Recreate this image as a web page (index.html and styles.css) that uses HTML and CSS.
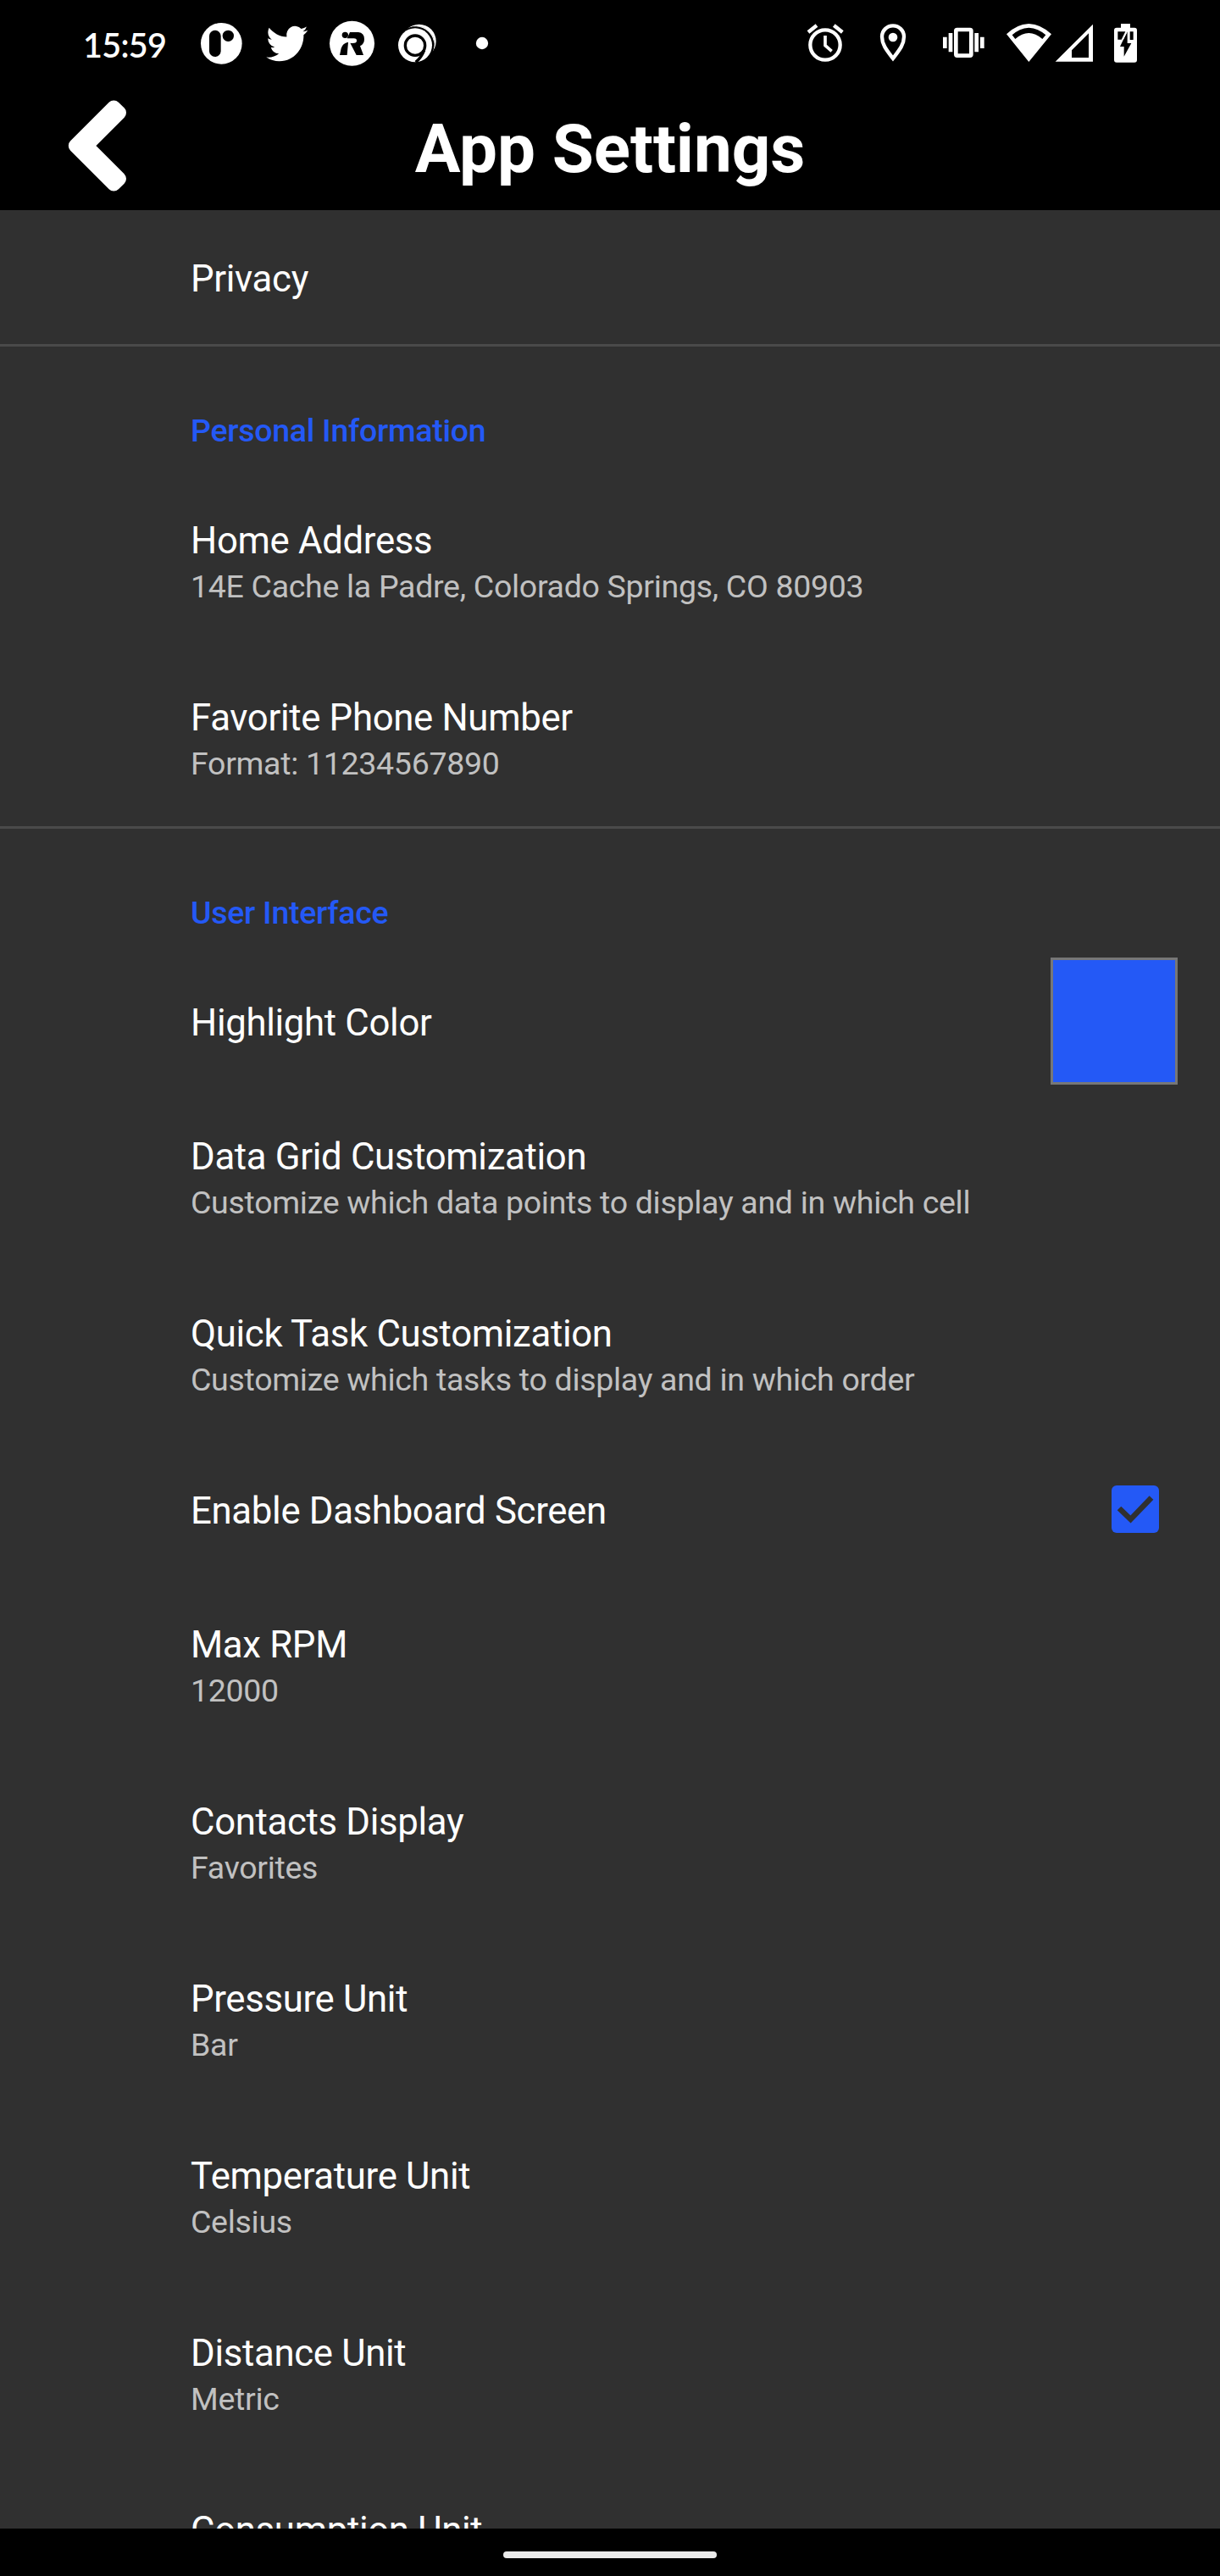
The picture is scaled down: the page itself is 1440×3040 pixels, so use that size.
FILE: index.html
```html
<!DOCTYPE html>
<html lang="en">
<head>
<meta charset="utf-8">
<title>App Settings</title>
<link rel="stylesheet" href="styles.css">
</head>
<body>
<div class="screen">
  <div class="status-bar">
    <span class="clock">15:59</span>
    <div class="status-icons">
      <svg width="77" height="90" viewBox="429 0 231 270"><circle cx="544" cy="124" r="73" fill="#fff"/><rect x="501" y="77" width="41" height="94" rx="20.5"/><circle cx="568" cy="97" r="20"/></svg>
      <svg width="77" height="90" viewBox="660 0 231 270"><path fill="#fff" transform="translate(703 48) scale(6.13 6.37)" d="M23.953 4.57a10 10 0 01-2.825.775 4.958 4.958 0 002.163-2.723c-.951.555-2.005.959-3.127 1.184a4.92 4.92 0 00-8.384 4.482C7.69 8.095 4.067 6.13 1.64 3.162a4.822 4.822 0 00-.666 2.475c0 1.71.87 3.213 2.188 4.096a4.904 4.904 0 01-2.228-.616v.06a4.923 4.923 0 003.946 4.827 4.996 4.996 0 01-2.212.085 4.936 4.936 0 004.604 3.417 9.867 9.867 0 01-6.102 2.105c-.39 0-.779-.023-1.17-.067a13.995 13.995 0 007.557 2.209c9.053 0 13.998-7.496 13.998-13.985 0-.21 0-.42-.015-.63A9.935 9.935 0 0024 4.59z"/></svg>
      <svg width="77" height="90" viewBox="111 0 231 270"><circle cx="226.500" cy="124" r="79.500" fill="#fff"/><circle cx="202" cy="94" r="11"/><path d="M219 84h30q21 2 21 25 0 17-15 24l12 32h-25l-22-43q20 3 23-6 1-10-10-10h-24zM213 119l-4 46h-26l5-24q5-18 25-22z"/></svg>
      <svg width="77" height="90" viewBox="342 0 231 270"><circle cx="464" cy="116" r="60" fill="#fff"/><circle cx="456" cy="124" r="62"/><circle cx="461" cy="119" r="56" fill="#fff"/><circle cx="452" cy="129" r="65"/><circle cx="450" cy="130" r="60" fill="#fff"/><circle cx="450" cy="131" r="35" fill="none" stroke="#000" stroke-width="10"/><path d="M482 148q-10 26-30 42" fill="none" stroke="#000" stroke-width="10"/></svg>
      <svg width="77" height="90" viewBox="573 0 231 270"><circle cx="687" cy="123" r="21.500" fill="#fff"/></svg>
    </div>
    <div class="status-icons system-icons">
      <svg width="80" height="90" viewBox="15 0 240 270" fill="none" stroke="#fff"><circle cx="132" cy="129" r="53" stroke-width="13"/><path d="M72 84l30-24M193 84l-30-24" stroke-width="13"/><path d="M132 96v35l23 20" stroke-width="11"/></svg>
      <svg width="80" height="90" viewBox="255 0 240 270"><path d="M372 177c-22-29-39-49-39-77a39 39 0 0 1 78 0c0 28-17 48-39 77z" fill="none" stroke="#fff" stroke-width="13"/><circle cx="372" cy="102" r="16" fill="#fff"/></svg>
      <svg width="80" height="90" viewBox="495 0 240 270"><path fill="#fff" fill-rule="evenodd" d="M599 68h46q11 0 11 11v84q0 11-11 11h-46q-11 0-11-11V79q0-11 11-11zm3 14v78h40V82zM569 87h14v67h-14zM661 87h14v67h-14zM549 101h14v40h-14zM681 101h14v40h-14z"/></svg>
      <svg width="68" height="90" viewBox="45 0 204 270"><path fill="#fff" fill-rule="evenodd" d="M163 189L84 91q35-35 79-37 44 2 80 37zM104 94l11 14q48-42 96 0l12-14q-26-24-60-26-34 2-59 26z"/></svg>
      <svg width="60" height="90" viewBox="249 0 180 270"><path fill="#fff" fill-rule="evenodd" d="M257 188L390 56v132zM315 174h60V88l-60 60z"/></svg>
      <svg width="50" height="90" viewBox="429 0 150 270"><path fill="#fff" d="M489 54h33v14h15q9 0 9 9v105q0 9-9 9h-63q-9 0-9-9V77q0-9 9-9h15z"/><path d="M478 82h27l-14 28h-13zM521 82h12v29h-12z"/><path d="M512 80l-26 55h14v35l26-47h-14z"/><path d="M512 80l-16 31" stroke="#fff" stroke-width="3"/></svg>
    </div>
  </div>

  <header class="app-bar">
    <svg class="back" width="80" height="120" viewBox="75 112 80 120"><path d="M134.300 126.500L88.800 172 134.300 217.500 141 211 102 172 141 133z" fill="#fff" stroke="#fff" stroke-width="16" stroke-linejoin="round"/></svg>
    <h1 class="app-title">App Settings</h1>
  </header>

  <main class="settings">
    <div class="row"><div class="title">Privacy</div></div>

    <h2 class="category">Personal Information</h2>
    <div class="row"><div class="title">Home Address</div><div class="summary">14E Cache la Padre, Colorado Springs, CO 80903</div></div>
    <div class="row"><div class="title">Favorite Phone Number</div><div class="summary">Format: 11234567890</div></div>

    <h2 class="category">User Interface</h2>
    <div class="row with-widget color-row"><div class="title">Highlight Color</div><div class="swatch"></div></div>
    <div class="row"><div class="title">Data Grid Customization</div><div class="summary">Customize which data points to display and in which cell</div></div>
    <div class="row"><div class="title">Quick Task Customization</div><div class="summary">Customize which tasks to display and in which order</div></div>
    <div class="row with-widget check-row"><div class="title">Enable Dashboard Screen</div>
      <svg class="checkbox" width="56" height="56" viewBox="0 0 56 56"><rect width="56" height="56" rx="6" fill="#2459f6"/><path d="M9 27l13.500 13L47 14.500" fill="none" stroke="#303030" stroke-width="6.500"/></svg>
    </div>
    <div class="row"><div class="title">Max RPM</div><div class="summary">12000</div></div>
    <div class="row"><div class="title">Contacts Display</div><div class="summary">Favorites</div></div>
    <div class="row"><div class="title">Pressure Unit</div><div class="summary">Bar</div></div>
    <div class="row"><div class="title">Temperature Unit</div><div class="summary">Celsius</div></div>
    <div class="row"><div class="title">Distance Unit</div><div class="summary">Metric</div></div>
    <div class="row"><div class="title">Consumption Unit</div></div>
  </main>

  <div class="nav-bar"><div class="nav-handle"></div></div>
</div>
</body>
</html>
```
FILE: styles.css
```css
* { box-sizing: border-box; }

body {
  margin: 0;
  background: #000;
  color: #fff;
  font-family: Roboto, sans-serif;
}

.screen {
  display: flex;
  flex-direction: column;
  width: 1440px;
  height: 3040px;
  overflow: hidden;
}

.status-bar {
  display: flex;
  flex: none;
  height: 104px;
  padding: 10px 87px 0 98px;
}

.clock {
  width: 125px;
  font: 600 39.5px/86px Lato, sans-serif;
  letter-spacing: -0.7px;
  white-space: nowrap;
}

.status-icons { display: flex; height: 90px; }
.system-icons { margin-left: auto; }

.app-bar {
  display: grid;
  grid-template-columns: 80px 1fr 80px;
  align-items: center;
  flex: none;
  height: 144px;
  padding: 0 75px 8px;
}

.app-title {
  margin: 0;
  padding-top: 8px;
  font-size: 80px;
  line-height: 94px;
  font-weight: 700;
  letter-spacing: -0.1px;
  text-align: center;
}

.settings {
  flex: 1;
  min-height: 0;
  overflow: hidden;
  background: #303030;
}

.row { padding: 52px 0 48px 225px; }

.title {
  font-size: 43.75px;
  line-height: 58px;
  letter-spacing: -0.33px;
}

.summary {
  color: #c1c1c1;
  font-size: 37.5px;
  line-height: 51px;
  letter-spacing: -0.3px;
}

.category {
  height: 151px;
  margin: 0;
  padding: 74px 0 0 225px;
  border-top: 3px solid #4a4a4a;
  color: #2459f6;
  font-size: 37.5px;
  line-height: 51px;
  font-weight: 500;
  letter-spacing: -0.28px;
}

.with-widget {
  display: flex;
  align-items: center;
  justify-content: space-between;
  height: 158px;
  padding-top: 0;
  padding-bottom: 0;
}

.with-widget .title { padding-top: 4px; }
.color-row { padding-right: 50px; }
.check-row { padding-right: 72px; }

.swatch {
  width: 150px;
  height: 150px;
  border: 3px solid #777;
  background: #2459f6;
}

.nav-bar {
  display: flex;
  flex: none;
  justify-content: center;
  height: 56px;
  padding-top: 27px;
}

.nav-handle {
  width: 252px;
  height: 8px;
  border-radius: 4px;
  background: #ebebeb;
}
```
